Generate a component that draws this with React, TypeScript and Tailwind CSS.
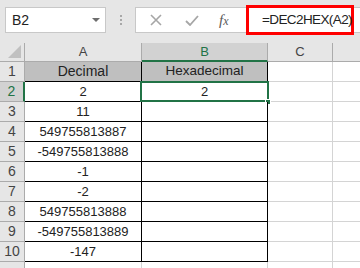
import React from "react";

const rows: string[] = [
  "Decimal",
  "2",
  "11",
  "549755813887",
  "-549755813888",
  "-1",
  "-2",
  "549755813888",
  "-549755813889",
  "-147",
  "",
];

const green = "#217346";

const Corner = () => (
  <div className="relative bg-[#e6e6e6] border-r border-b border-[#ababab]">
    <svg className="absolute right-[3px] bottom-[3px]" width="13" height="13" viewBox="0 0 13 13">
      <polygon points="13,0 13,13 0,13" fill="#c0c0c0" />
    </svg>
  </div>
);

export default function App() {
  return (
    <div className="w-[360px] h-[268px] overflow-hidden bg-white text-[#222]" style={{ fontFamily: '"Liberation Sans", Arial, sans-serif' }}>
      {/* formula bar */}
      <div className="h-[43px] bg-[#e6e6e6] flex items-start pt-[5px]">
        <div className="ml-[5px] mt-[2px] w-[101px] h-[26px] bg-white border border-[#c8c8c8] flex items-center pl-[6px] pr-[5px] justify-between">
          <span className="text-[14px]">B2</span>
          <svg width="8" height="5" viewBox="0 0 8 5">
            <polygon points="0,0 8,0 4,4" fill="#6d6d6d" />
          </svg>
        </div>
        <div className="ml-[14px] mt-[10px] flex flex-col gap-[2px]">
          <div className="w-[2px] h-[2px] bg-[#a8a8a8]" />
          <div className="w-[2px] h-[2px] bg-[#a8a8a8]" />
          <div className="w-[2px] h-[2px] bg-[#a8a8a8]" />
        </div>
        <div className="ml-[13px] mt-[2px] w-[111px] h-[26px] bg-white border border-[#c8c8c8] border-r-0 flex items-center">
          <svg className="ml-[14px]" width="12" height="12" viewBox="0 0 12 12">
            <path d="M1 1 L11 11 M11 1 L1 11" stroke="#a6a6a6" strokeWidth="1.6" />
          </svg>
          <svg className="ml-[23px]" width="14" height="11" viewBox="0 0 14 11">
            <path d="M1 6 L5 10 L13 1" stroke="#a6a6a6" strokeWidth="1.8" fill="none" />
          </svg>
          <span className="ml-[20px] text-[15px] italic text-[#5a5a5a]" style={{ fontFamily: '"Liberation Serif", serif' }}>
            f<span className="text-[12px]">x</span>
          </span>
        </div>
        <div className="w-[108px] h-[30px] bg-white border-[3px] border-[#ff0000] flex items-center pl-[13px]">
          <span className="text-[13.5px] tracking-[-0.6px] text-[#222]">=DEC2HEX(A2)</span>
        </div>
        <div className="flex-1 mt-[2px] h-[26px] bg-white border-y border-[#c8c8c8]" />
      </div>

      {/* sheet */}
      <div className="grid grid-cols-[25px_117px_126px_65px_1fr] grid-rows-[19px_repeat(11,20px)] text-[13px]">
        <Corner />
        <div className="bg-[#e6e6e6] border-r border-b border-[#ababab] flex items-center justify-center text-[#444]">A</div>
        <div className="bg-[#d2d2d2] border-r border-[#ababab] border-b-2 border-b-[#217346] flex items-center justify-center text-[#217346]">B</div>
        <div className="bg-[#e6e6e6] border-r border-b border-[#ababab] flex items-center justify-center text-[#444]">C</div>
        <div className="bg-[#e6e6e6] border-b border-[#ababab]" />

        {rows.map((val, i) => {
          const n = i + 1;
          const sel = n === 2;
          const inTable = n <= 10;
          return (
            <React.Fragment key={n}>
              <div
                className={
                  sel
                    ? "bg-[#d2d2d2] border-b border-[#ababab] border-r-2 border-r-[#217346] flex items-center justify-center text-[14px] text-[#217346]"
                    : "bg-[#e6e6e6] border-r border-b border-[#ababab] flex items-center justify-center text-[14px] text-[#444]"
                }
              >
                {inTable ? n : ""}
              </div>
              <div
                className={
                  inTable
                    ? `border-r border-b border-black flex items-center justify-center ${n === 1 ? "bg-[#bfbfbf] text-[14px]" : "bg-white"}`
                    : "border-r border-b border-[#d4d4d4]"
                }
              >
                {val}
              </div>
              <div
                className={
                  inTable
                    ? `relative border-r border-b border-black flex items-center justify-center ${n === 1 ? "bg-[#bfbfbf] text-[13.5px]" : "bg-white"}`
                    : "border-r border-b border-[#d4d4d4]"
                }
              >
                {n === 1 ? "Hexadecimal" : n === 2 ? "2" : ""}
                {sel && (
                  <>
                    <div className="absolute -left-[2px] -top-[1px] -right-[2px] -bottom-[1px] border-2 border-[#217346]" style={{ borderColor: green }} />
                    <div className="absolute -right-[4px] -bottom-[4px] w-[6px] h-[6px] bg-[#217346] border border-white" />
                  </>
                )}
              </div>
              <div className="border-r border-b border-[#d4d4d4]" />
              <div className="border-b border-[#d4d4d4]" />
            </React.Fragment>
          );
        })}
      </div>
    </div>
  );
}
